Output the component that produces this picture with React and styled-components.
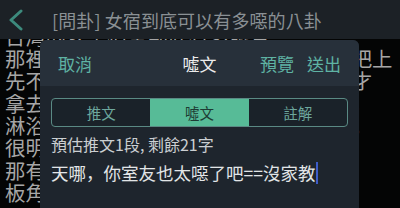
import React from "react";
import styled, { createGlobalStyle } from "styled-components";

const GlobalStyle = createGlobalStyle`
  html, body { margin: 0; padding: 0; background: #000; }
  body { font-family: "Noto Sans CJK TC", "Noto Sans", sans-serif; }
`;

const Screen = styled.div`
  position: relative;
  width: 400px;
  height: 208px;
  overflow: hidden;
  background: #040505;
  display: flex;
  flex-direction: column;
`;

const TopBar = styled.header`
  position: relative;
  z-index: 1;
  height: 39px;
  flex: none;
  background: #1c2126;
  display: flex;
  align-items: center;
  padding-left: 8px;
  gap: 28px;
`;

const Title = styled.h1`
  margin: 0;
  font-size: 18px;
  font-weight: 400;
  color: #8a9094;
  white-space: nowrap;
  letter-spacing: 0.1px;
`;

const Article = styled.div`
  margin-top: -14.3px;
  padding-left: 5px;
  font-family: "Noto Sans CJK JP", "Noto Sans CJK TC", sans-serif;
  font-size: 20.4px;
  line-height: 22.33px;
  color: #a6a6a6;
  white-space: nowrap;
`;

const Line = styled.div``;

const Panel = styled.section`
  position: absolute;
  left: 40px;
  top: 40px;
  width: 319px;
  bottom: 0;
  background: #1e252d;
  border-radius: 6px 6px 0 0;
  overflow: hidden;
  z-index: 2;
`;

const PanelHeader = styled.div`
  height: 46px;
  background: #27303a;
  display: grid;
  grid-template-columns: 1fr auto 1fr;
  align-items: center;
  padding: 0 18px;
  font-size: 17px;
`;

const LinkButton = styled.span`
  color: #5fb3a4;
`;

const HeaderTitle = styled.span`
  color: #ececec;
`;

const Actions = styled.div`
  display: flex;
  justify-content: flex-end;
  gap: 13px;
`;

const Body = styled.div`
  padding: 12px 11px 0;
`;

const Tabs = styled.div`
  height: 29px;
  display: grid;
  grid-template-columns: repeat(3, 1fr);
  border: 1px solid #5a8a84;
  border-radius: 4px;
  overflow: hidden;
  box-sizing: border-box;
  background: #1a2229;
`;

const Tab = styled.div`
  display: flex;
  align-items: center;
  justify-content: center;
  font-size: 14.5px;
  color: ${(p) => (p.$active ? "#1d3b34" : "#6da79d")};
  background: ${(p) => (p.$active ? "#57bb97" : "transparent")};
`;

const Info = styled.div`
  margin-top: 8px;
  font-size: 16px;
  line-height: 19.2px;
  color: #cbcfd2;
  white-space: nowrap;
`;

const Input = styled.div`
  margin-top: 7px;
  font-family: "Noto Sans CJK JP", "Noto Sans CJK TC", sans-serif;
  font-size: 17.5px;
  line-height: 24px;
  color: #e2e5e7;
  white-space: nowrap;
  display: flex;
  align-items: center;
`;

const Caret = styled.span`
  display: inline-block;
  width: 2px;
  height: 22px;
  margin-left: 1px;
  background: #3d5cc8;
`;

const lines = [
  "台灣的女生宿舍到底有多髒真",
  "那裡的廁所常常都是頭髮衛生紙丟滿地把上",
  "先不說垃圾都不倒堆到發臭還要等到最才",
  "拿去洗的衣服放在洗衣機裡好幾天都彩，",
  "淋浴間的排水孔永遠塞滿頭髮根本就了。",
  "很明顯大家都覺得反正不是自己",
  "那有人吃完的便當直接放在走廊上問地",
  "板角還有人丟衛生棉真的讓人受不了，",
];

export default function App() {
  return (
    <>
      <GlobalStyle />
      <Screen>
        <TopBar>
          <svg width="16" height="22" viewBox="0 0 16 22">
            <polyline
              points="13,2 3,11 13,20"
              fill="none"
              stroke="#3d8a7d"
              strokeWidth="3"
              strokeLinecap="round"
              strokeLinejoin="round"
            />
          </svg>
          <Title>[問卦] 女宿到底可以有多噁的八卦</Title>
        </TopBar>
        <Article>
          {lines.map((l, i) => (
            <Line key={i}>{l}</Line>
          ))}
        </Article>
        <Panel>
          <PanelHeader>
            <LinkButton>取消</LinkButton>
            <HeaderTitle>噓文</HeaderTitle>
            <Actions>
              <LinkButton>預覽</LinkButton>
              <LinkButton>送出</LinkButton>
            </Actions>
          </PanelHeader>
          <Body>
            <Tabs>
              <Tab>推文</Tab>
              <Tab $active>噓文</Tab>
              <Tab>註解</Tab>
            </Tabs>
            <Info>預估推文1段, 剩餘21字</Info>
            <Input>
              天哪，你室友也太噁了吧==沒家教
              <Caret />
            </Input>
          </Body>
        </Panel>
      </Screen>
    </>
  );
}
